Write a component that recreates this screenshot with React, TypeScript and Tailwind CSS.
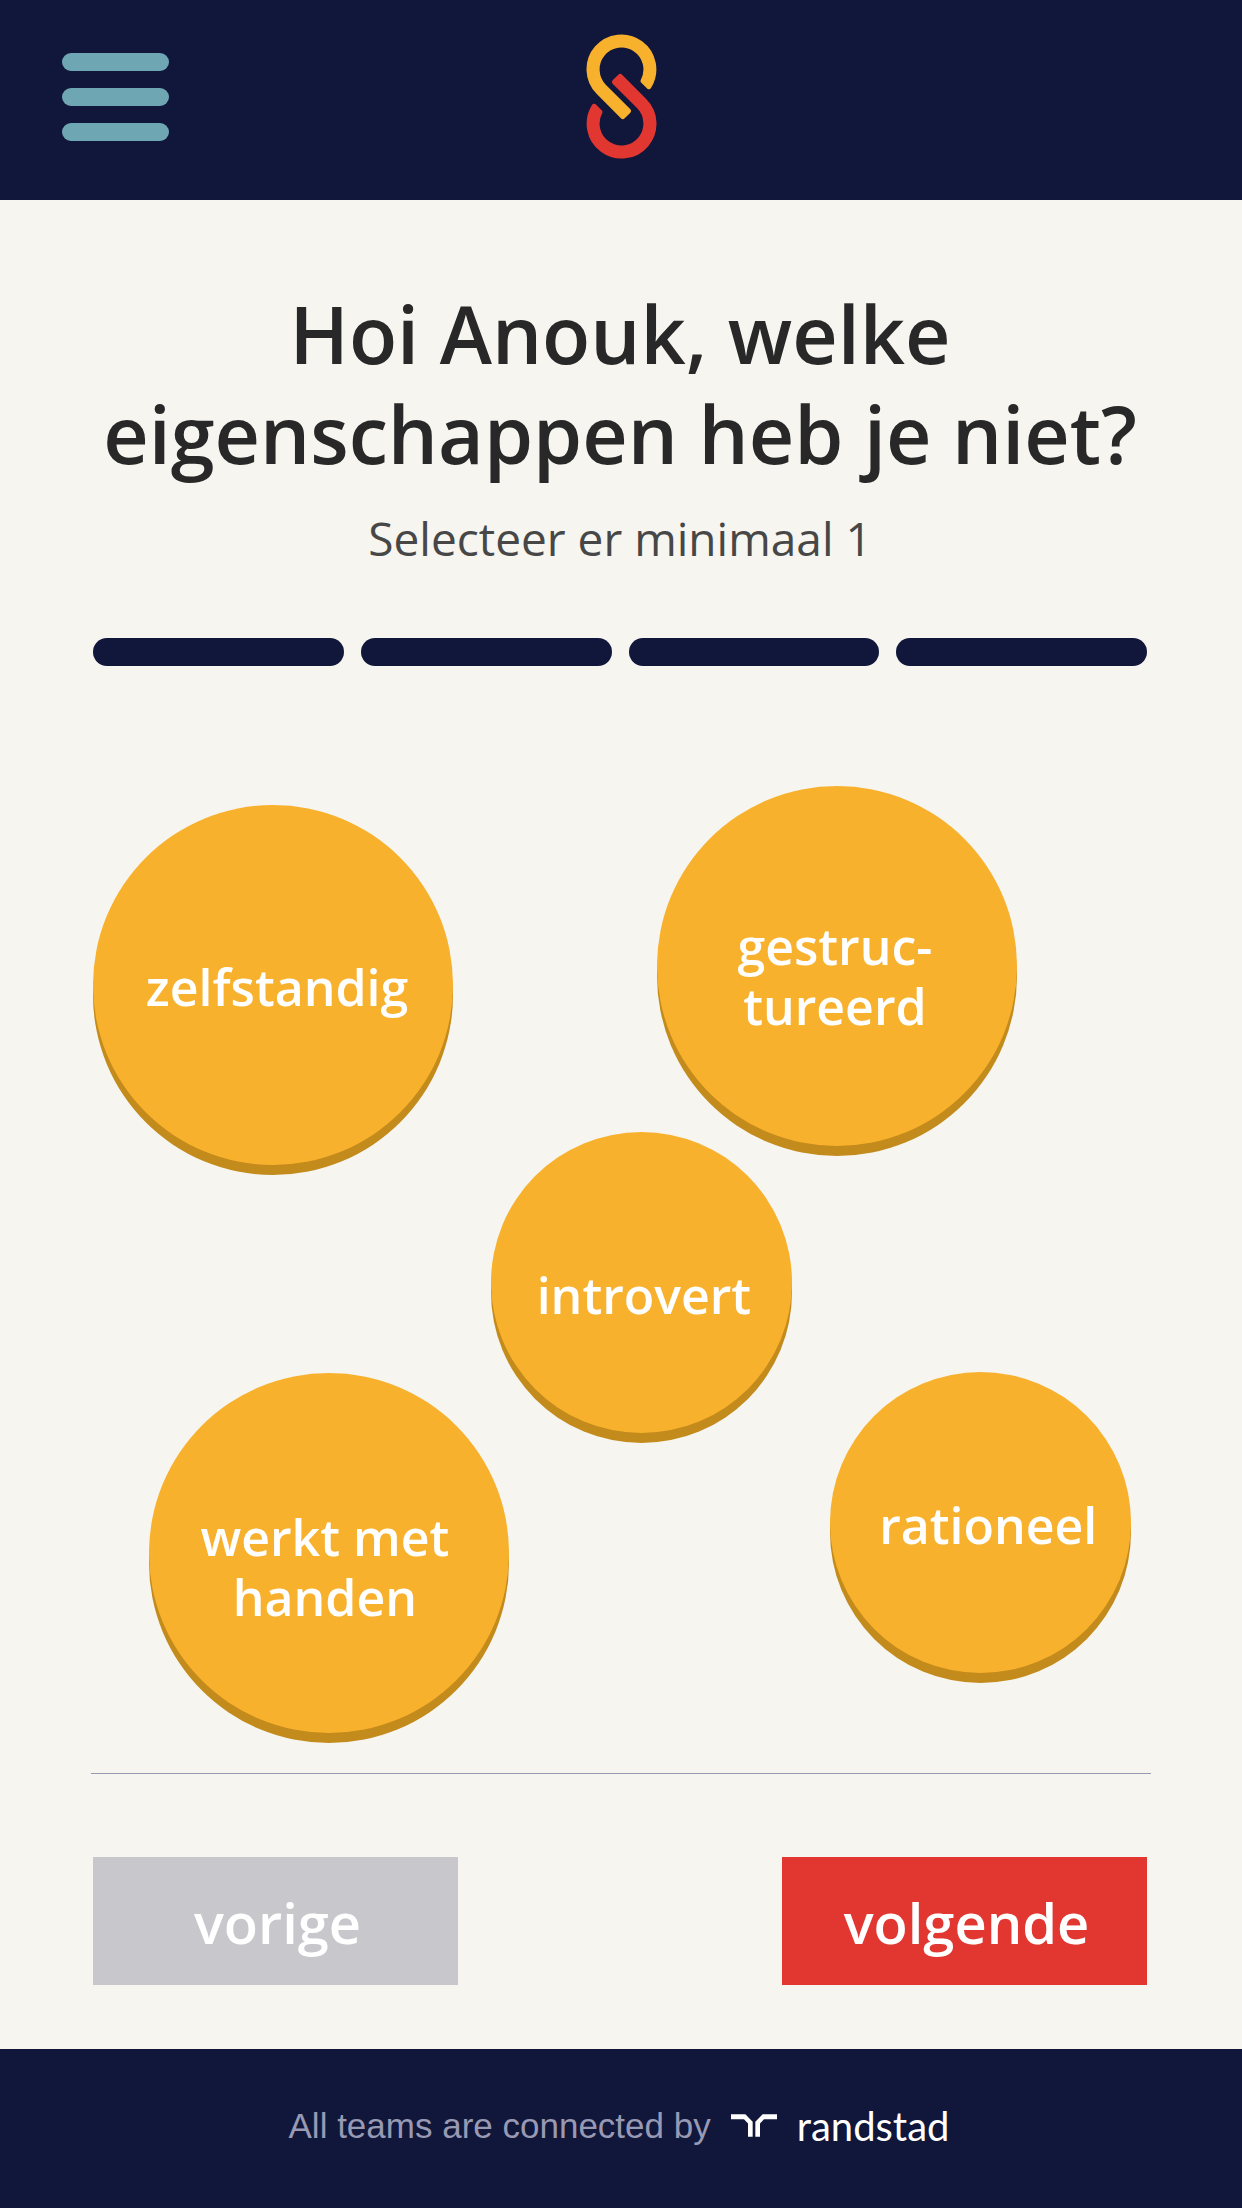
import React from "react";

type Trait = { label: string; text: string; place: string };

const traits: Trait[] = [
  { label: "zelfstandig", text: "zelfstandig", place: "left-0 top-[19px] size-[360px] pl-2 pt-1" },
  { label: "gestructureerd", text: "gestruc-\ntureerd", place: "left-[53.5%] top-0 size-[360px] pt-5 pr-1" },
  { label: "introvert", text: "introvert", place: "left-[37.8%] top-[346px] size-[301px] pl-1 pt-6" },
  { label: "werkt met handen", text: "werkt met\nhanden", place: "left-[5.3%] top-[587px] size-[360px] pr-2 pt-7" },
  { label: "rationeel", text: "rationeel", place: "left-[69.9%] top-[586px] size-[301px] pl-4 pt-1" },
];

const loop =
  "M251.5 184.5 A73.5 73.5 0 1 0 134.5 202 L206.6 274.4 L190.4 290.6 L118.3 218.2 A96.5 96.5 0 1 1 268 201 Z";

function Logo() {
  return (
    <svg viewBox="81 44 211 374" className="h-[125px] w-[71px]" strokeWidth="16" strokeLinejoin="round" role="img" aria-label="Logo">
      <path d={loop} fill="#f8b12d" stroke="#f8b12d" />
      <path d={loop} fill="#e23731" stroke="#e23731" transform="rotate(180 186.5 231)" />
    </svg>
  );
}

function Header() {
  return (
    <header className="grid h-[200px] grid-cols-[1fr_auto_1fr] items-center bg-[#11163b] px-[62px]">
      <button type="button" aria-label="Menu" className="flex w-[107px] flex-col gap-[17px] pb-1.5">
        <span className="h-[18px] w-full rounded-full bg-[#6ea6b4]" />
        <span className="h-[18px] w-full rounded-full bg-[#6ea6b4]" />
        <span className="h-[18px] w-full rounded-full bg-[#6ea6b4]" />
      </button>
      <div className="pb-2">
        <Logo />
      </div>
    </header>
  );
}

function Bubble({ trait }: { trait: Trait }) {
  return (
    <button
      type="button"
      aria-label={trait.label}
      className={`absolute flex items-center justify-center rounded-full bg-[#f8b12d] text-center text-[50px] leading-[60px] font-semibold whitespace-pre-line text-white shadow-[0_10px_0_#c38a1c] ${trait.place}`}
    >
      {trait.text}
    </button>
  );
}

function Footer() {
  return (
    <footer className="flex h-[159px] items-center justify-center bg-[#11163b] pr-1 pb-1.5">
      <p className="font-['Liberation_Sans',sans-serif] text-[35px] leading-[48px] text-[#9899b2]">All teams are connected by</p>
      <a href="#randstad" className="ml-5 flex items-center gap-5 text-white">
        <svg viewBox="36 69 138 68" className="h-[23px] w-[46px]" fill="currentColor" aria-hidden="true">
          <path d="M36 69H79L101 92V137H87V97L75 84H36Z" />
          <path d="M174 69H131L109 92V137H123V97L135 84H174Z" />
        </svg>
        <span className="font-['Lato',sans-serif] text-[40px] leading-[48px]">randstad</span>
      </a>
    </footer>
  );
}

export default function App() {
  return (
    <div className="flex min-h-screen flex-col bg-[#f6f5f0] font-['Open_Sans',sans-serif]">
      <Header />
      <main className="flex-1 pt-[84px] pr-[95px] pb-16 pl-[93px]">
        <h1 className="-mx-8 text-center text-[79px] leading-[100px] font-semibold text-[#282828]">
          Hoi Anouk, welke
          <br />
          eigenschappen heb je niet?
        </h1>
        <p className="mt-[22px] text-center text-[46px] leading-[64px] text-[#474747]">Selecteer er minimaal 1</p>
        <div className="mt-[68px] grid grid-cols-4 gap-[17px]" role="progressbar" aria-label="Voortgang" aria-valuemin={0} aria-valuemax={4} aria-valuenow={4}>
          {[1, 2, 3, 4].map((step) => (
            <span key={step} className="h-7 rounded-full bg-[#11163b]" />
          ))}
        </div>
        <div className="relative mt-[120px] h-[987px]">
          {traits.map((trait) => (
            <Bubble key={trait.label} trait={trait} />
          ))}
        </div>
        <hr className="-mr-1 -ml-0.5 border-t border-[#9599b1]" />
        <nav className="mt-[83px] flex justify-between" aria-label="Stappen">
          <button type="button" className="h-32 w-[365px] bg-[#c8c7cc] pt-0.5 pl-1 text-[56px] font-semibold text-white">vorige</button>
          <button type="button" className="h-32 w-[365px] bg-[#e23731] pt-0.5 pl-1 text-[56px] font-semibold text-white">volgende</button>
        </nav>
      </main>
      <Footer />
    </div>
  );
}
